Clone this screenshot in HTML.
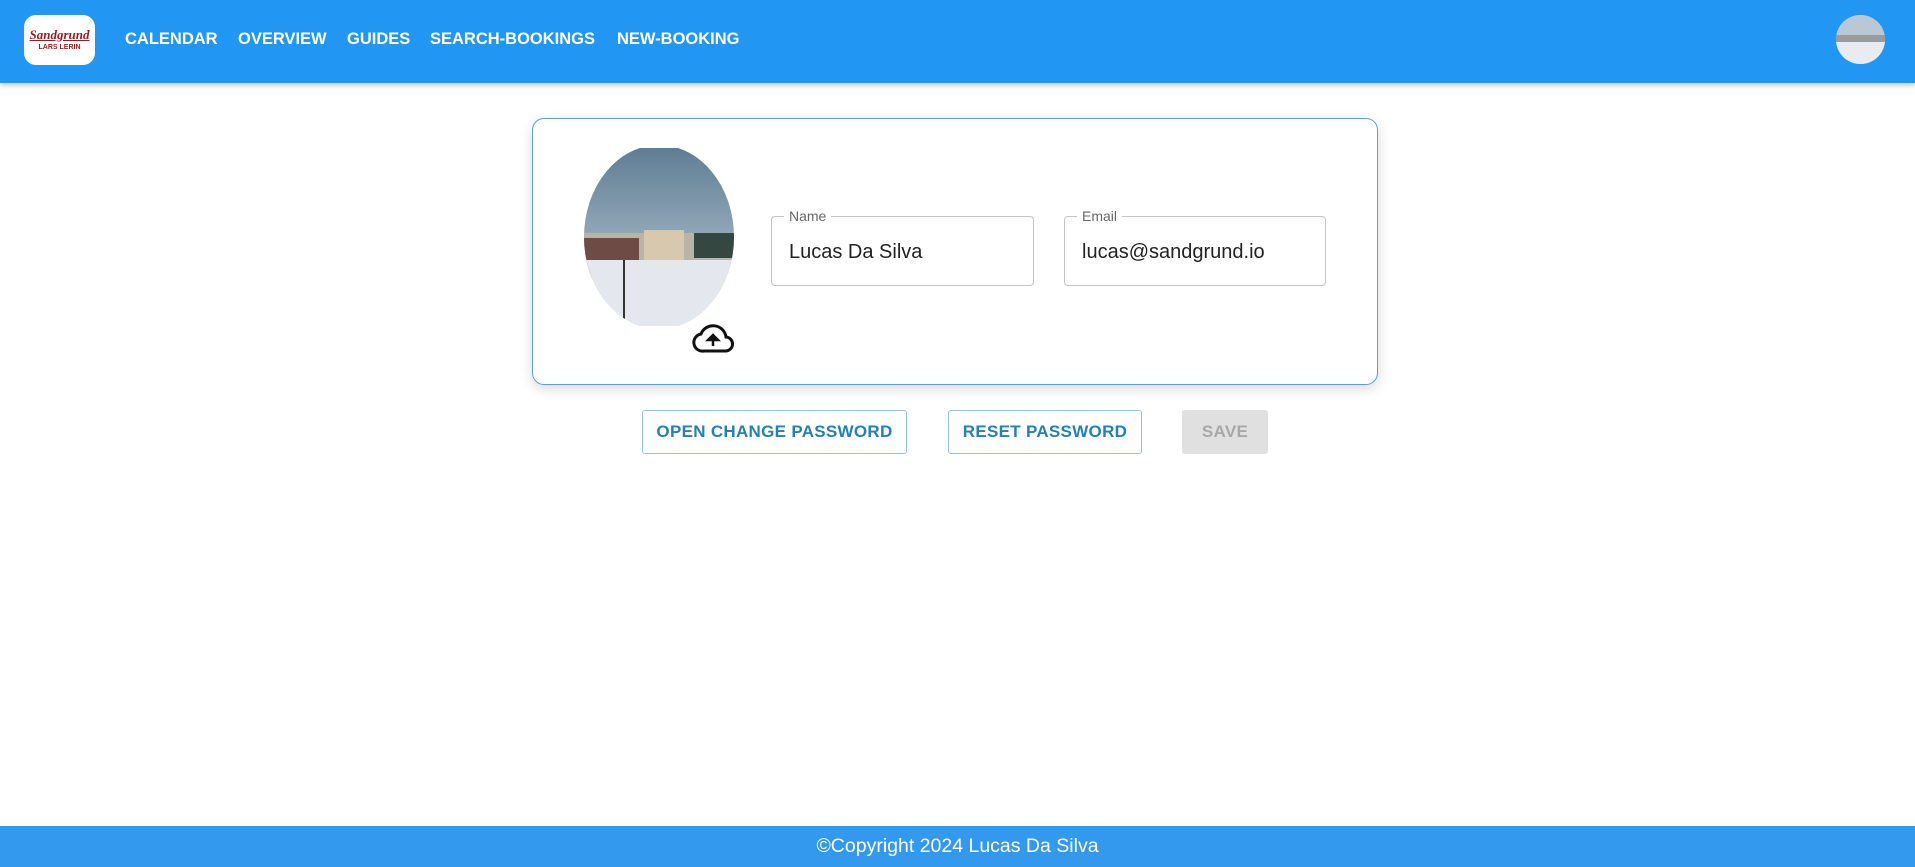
<!DOCTYPE html>
<html><head><meta charset="utf-8"><style>
*{margin:0;padding:0;box-sizing:border-box}
body{width:1915px;height:867px;position:relative;background:#fff;font-family:"Liberation Sans",Arial,sans-serif;overflow:hidden}
.hdr{position:absolute;left:0;top:0;width:1915px;height:83px;background:#2196f3;box-shadow:0 2px 5px rgba(0,0,0,.25)}
.logo{position:absolute;left:24px;top:15px;width:71px;height:50px;background:#fff;border-radius:12px}
.nav{position:absolute;top:30px;color:#fff;font-weight:bold;font-size:16.5px;word-spacing:-1px}
.av{position:absolute;left:1836px;top:15px;width:49px;height:49px;border-radius:50%;overflow:hidden}
.card{position:absolute;left:532px;top:118px;width:846px;height:267px;border:1px solid #5d9fd0;border-radius:12px;box-shadow:0 4px 12px rgba(0,0,0,.15);background:#fff}
.fld{position:absolute;top:216px;height:70px;border:1px solid #c4c4c4;border-radius:4px}
.lbl{position:absolute;top:-9px;left:12px;background:#fff;padding:0 5px;font-size:14px;color:#666}
.val{position:absolute;left:17px;top:24px;font-size:20px;color:#222}
.btn{position:absolute;top:410px;height:44px;border:1px solid #9cc3dc;border-radius:3px;color:#2181b9;font-size:17px;font-weight:bold;display:flex;align-items:center;justify-content:center;letter-spacing:.3px}
.ftr{position:absolute;left:0;top:826px;width:1915px;height:41px;background:#3399ee;color:#fff;font-size:19.5px;text-align:center;line-height:41px}
</style></head><body>
<div class="hdr">
 <div class="logo">
  <div style="position:absolute;left:2px;top:12px;width:67px;text-align:center;color:#9b1c1c;font-family:'Liberation Serif',serif;font-style:italic;font-weight:bold;font-size:13px;text-decoration:underline">Sandgrund</div>
  <div style="position:absolute;left:4px;top:29px;width:63px;text-align:center;color:#9b1c1c;font-size:7px;font-weight:bold">LARS LERIN</div>
 </div>
 <div class="nav" style="left:125px">CALENDAR</div>
 <div class="nav" style="left:238px">OVERVIEW</div>
 <div class="nav" style="left:347px">GUIDES</div>
 <div class="nav" style="left:430px">SEARCH-BOOKINGS</div>
 <div class="nav" style="left:617px">NEW-BOOKING</div>
 <div class="av"><svg width="49" height="49"><rect width="49" height="49" fill="#dfe6ec"/><rect width="49" height="20" fill="#b9c8d4"/><rect y="20" width="49" height="7" fill="#6b6b6b" opacity=".6"/><rect y="27" width="49" height="22" fill="#e8ecf0"/></svg></div>
</div>
<div class="card"></div>
<svg style="position:absolute;left:584px;top:148px" width="150" height="180">
 <defs><clipPath id="c"><ellipse cx="75" cy="89" rx="75" ry="92"/></clipPath>
 <linearGradient id="s" x1="0" y1="0" x2="0" y2="1"><stop offset="0" stop-color="#5f7d94"/><stop offset="1" stop-color="#c5d3dd"/></linearGradient></defs>
 <g clip-path="url(#c)">
  <rect x="0" y="0" width="150" height="178" fill="url(#s)"/>
  <rect x="0" y="85" width="150" height="40" fill="#b9b3a8"/>
  <rect x="0" y="90" width="55" height="40" fill="#6e4b44"/>
  <rect x="60" y="82" width="40" height="30" fill="#d8c8ae"/>
  <rect x="110" y="85" width="40" height="25" fill="#344740"/>
  <rect x="0" y="112" width="150" height="66" fill="#e4e7ee"/>
  <rect x="39" y="112" width="2" height="60" fill="#333"/>
 </g>
</svg>
<svg style="position:absolute;left:692px;top:322px" width="42" height="32" viewBox="0 0 42 32">
 <path d="M12 29H33a7 7 0 0 0 1-14A13 13 0 0 0 9 12 8.5 8.5 0 0 0 12 29Z" fill="none" stroke="#111" stroke-width="3"/>
 <path d="M21 24V15M16 18l5-5 5 5Z" fill="#111" stroke="#111" stroke-width="2.5"/>
</svg>
<div class="fld" style="left:771px;width:263px"><span class="lbl">Name</span><span class="val">Lucas Da Silva</span></div>
<div class="fld" style="left:1064px;width:262px"><span class="lbl">Email</span><span class="val">lucas@sandgrund.io</span></div>
<div class="btn" style="left:642px;width:265px">OPEN CHANGE PASSWORD</div>
<div class="btn" style="left:948px;width:194px">RESET PASSWORD</div>
<div class="btn" style="left:1182px;width:86px;background:#e0e0e0;border-color:#e0e0e0;color:#a8a8a8">SAVE</div>
<div class="ftr">©Copyright 2024 Lucas Da Silva</div>
</body></html>
